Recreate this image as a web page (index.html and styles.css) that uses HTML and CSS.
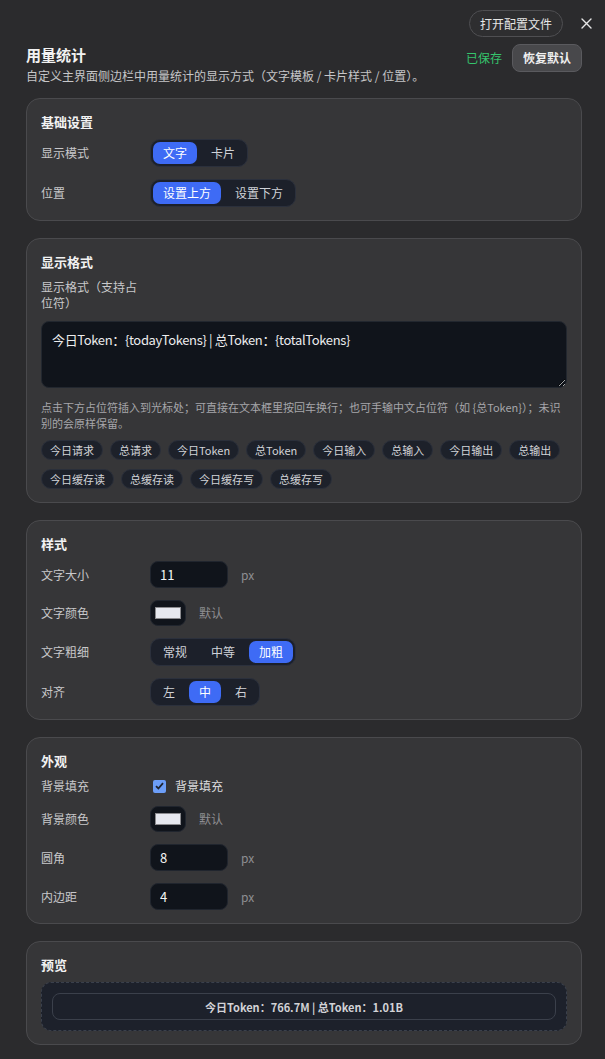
FILE: index.html
```html
<!DOCTYPE html>
<html lang="zh-CN">
<head>
<meta charset="UTF-8" />
<meta name="viewport" content="width=device-width, initial-scale=1" />
<title>用量统计</title>
<link rel="stylesheet" href="styles.css">
</head>
<body>
<div class="topbar">
    <button class="btn-outline">打开配置文件</button>
    <button class="close" aria-label="关闭">
        <svg width="11" height="11" viewBox="0 0 11 11"><path d="M1 1 L10 10 M10 1 L1 10" stroke="#e6e6e6" stroke-width="1.4" stroke-linecap="round"/></svg>
    </button>
</div>

<div class="page">
    <header class="head">
        <div>
            <h1>用量统计</h1>
            <p class="desc">自定义主界面侧边栏中用量统计的显示方式（文字模板 / 卡片样式 / 位置）。</p>
        </div>
        <div class="head-actions">
            <span class="saved">已保存</span>
            <button class="btn-reset">恢复默认</button>
        </div>
    </header>

    <section class="card">
        <h2>基础设置</h2>
        <div class="row">
            <span class="label">显示模式</span>
            <div class="seg"><button class="on">文字</button><button>卡片</button></div>
        </div>
        <div class="row">
            <span class="label">位置</span>
            <div class="seg"><button class="on">设置上方</button><button>设置下方</button></div>
        </div>
    </section>

    <section class="card">
        <h2>显示格式</h2>
        <label class="label label-wrap" for="fmt">显示格式（支持占位符）</label>
        <textarea id="fmt" class="fmt">今日Token：{todayTokens} | 总Token：{totalTokens}</textarea>
        <p class="hint">点击下方占位符插入到光标处；可直接在文本框里按回车换行；也可手输中文占位符（如 {总Token}）；未识别的会原样保留。</p>
        <div class="chips">
            <span class="chip">今日请求</span>
            <span class="chip">总请求</span>
            <span class="chip">今日Token</span>
            <span class="chip">总Token</span>
            <span class="chip">今日输入</span>
            <span class="chip">总输入</span>
            <span class="chip">今日输出</span>
            <span class="chip">总输出</span>
            <span class="chip">今日缓存读</span>
            <span class="chip">总缓存读</span>
            <span class="chip">今日缓存写</span>
            <span class="chip">总缓存写</span>
        </div>
    </section>

    <section class="card">
        <h2>样式</h2>
        <div class="row">
            <span class="label">文字大小</span>
            <div class="field"><input class="num" type="text" value="11"><span class="unit">px</span></div>
        </div>
        <div class="row">
            <span class="label">文字颜色</span>
            <div class="field"><span class="swatch"><span></span></span><span class="unit">默认</span></div>
        </div>
        <div class="row">
            <span class="label">文字粗细</span>
            <div class="seg"><button>常规</button><button>中等</button><button class="on">加粗</button></div>
        </div>
        <div class="row">
            <span class="label">对齐</span>
            <div class="seg"><button>左</button><button class="on">中</button><button>右</button></div>
        </div>
    </section>

    <section class="card">
        <h2>外观</h2>
        <div class="row row-check">
            <span class="label">背景填充</span>
            <label class="check">
                <span class="box"><svg width="9" height="8" viewBox="0 0 9 8"><path d="M1 4.2 L3.4 6.5 L8 1.2" fill="none" stroke="#1e2430" stroke-width="1.8"/></svg></span>
                背景填充
            </label>
        </div>
        <div class="row">
            <span class="label">背景颜色</span>
            <div class="field"><span class="swatch"><span></span></span><span class="unit">默认</span></div>
        </div>
        <div class="row">
            <span class="label">圆角</span>
            <div class="field"><input class="num" type="text" value="8"><span class="unit">px</span></div>
        </div>
        <div class="row">
            <span class="label">内边距</span>
            <div class="field"><input class="num" type="text" value="4"><span class="unit">px</span></div>
        </div>
    </section>

    <section class="card">
        <h2>预览</h2>
        <div class="preview">
            <div class="preview-pill">今日Token：766.7M | 总Token：1.01B</div>
        </div>
    </section>
</div>
</body>
</html>
```

FILE: styles.css
```css
body { margin: 0; background: #2b2b2d; color: #d4d4d6; font-family: "Noto Sans CJK SC", "Noto Sans", sans-serif; font-size: 12px; }
button { font-family: inherit; cursor: pointer; }

.topbar { display: flex; justify-content: flex-end; align-items: center; gap: 17px; height: 27px; padding: 10px 13px 0 0; }
.btn-outline { height: 27px; padding: 0 10px; border: 1px solid #4f4f52; border-radius: 14px; background: #2e2e30; color: #e6e6e6; font-size: 12px; line-height: 16px; }
.close { width: 12px; height: 12px; padding: 0; border: none; background: none; display: flex; align-items: center; justify-content: center; }

.page { padding: 7px 23px 18px 26px; }
.head { display: flex; justify-content: space-between; align-items: flex-start; margin-bottom: 14px; }
h1 { margin: 0; font-size: 15px; line-height: 22px; color: #f2f2f2; font-weight: 700; }
.desc { margin: 2px 0 0; font-size: 12px; line-height: 16px; color: #c6c6c8; }
.head-actions { display: flex; align-items: center; gap: 10px; }
.saved { color: #35c46c; font-size: 12px; line-height: 16px; }
.btn-reset { height: 28px; padding: 0 10px; border: 1px solid #5a5a5e; border-radius: 8px; background: #48484b; color: #f0f0f0; font-size: 12px; line-height: 16px; font-weight: 700; }

.card { background: #363638; border: 1px solid #4a4a4d; border-radius: 14px; padding: 14px 14px 13px; margin-bottom: 17px; }
h2 { margin: 0 0 9px; font-size: 13px; line-height: 17px; color: #f2f2f2; font-weight: 700; }

.row { display: flex; align-items: center; }
.row + .row { margin-top: 12px; }
.row-check { height: 16px; }
.label { display: block; width: 109px; flex: none; color: #c8c8ca; font-size: 12px; line-height: 16px; }
.label-wrap { width: 100px; }

.seg { display: inline-flex; gap: 4px; padding: 2px; border: 1px solid #2b303c; border-radius: 10px; background: #1c202a; }
.seg button { height: 22px; padding: 0 10px; border: none; border-radius: 7px; background: transparent; color: #cfd2d8; font-size: 12px; line-height: 16px; }
.seg button.on { background: #3e6bf5; color: #fff; }

.field { display: flex; align-items: center; gap: 13px; }
.num { width: 78px; height: 27px; box-sizing: border-box; padding: 0 9px; border: 1px solid #20252e; border-radius: 8px; background: #10141b; color: #f4f4f4; font-family: inherit; font-size: 13px; outline: none; }
.unit { color: #8e8e92; font-size: 12px; line-height: 16px; }
.swatch { width: 36px; height: 26px; box-sizing: border-box; padding: 6px 4px; border: 1px solid #20252e; border-radius: 8px; background: #10141b; display: flex; }
.swatch span { flex: 1; background: #e6e8ef; border: 1px solid #8a8a8e; }

.check { display: flex; align-items: center; gap: 9px; margin-left: 3px; color: #dcdcde; font-size: 12px; line-height: 16px; }
.box { width: 13px; height: 13px; border-radius: 2px; background: #6c9ef8; display: flex; align-items: center; justify-content: center; }

.fmt { display: block; width: 100%; height: 67px; box-sizing: border-box; margin-top: 10px; padding: 9px 10px; border: 1px solid #22272f; border-radius: 8px; background: #10141b; color: #ececee; font-family: inherit; font-size: 13px; line-height: 17px; letter-spacing: -0.35px; outline: none; resize: vertical; }
.hint { margin: 11px 0 9px; font-size: 11px; line-height: 16px; color: #a6a6aa; }

.chips { display: flex; flex-wrap: wrap; gap: 9px 7px; }
.chip { height: 20px; box-sizing: border-box; padding: 0 8px; border: 1px solid #2a2f3a; border-radius: 10px; background: #1d212a; color: #d2d4d8; font-size: 11px; line-height: 18px; }

.preview { padding: 10px; border: 1px dashed #3a404c; border-radius: 10px; background: #1d212b; }
.preview-pill { height: 27px; box-sizing: border-box; border: 1px solid #3b404b; border-radius: 8px; display: flex; align-items: center; justify-content: center; color: #d2d2d6; font-size: 11px; line-height: 16px; font-weight: 700; }
```
